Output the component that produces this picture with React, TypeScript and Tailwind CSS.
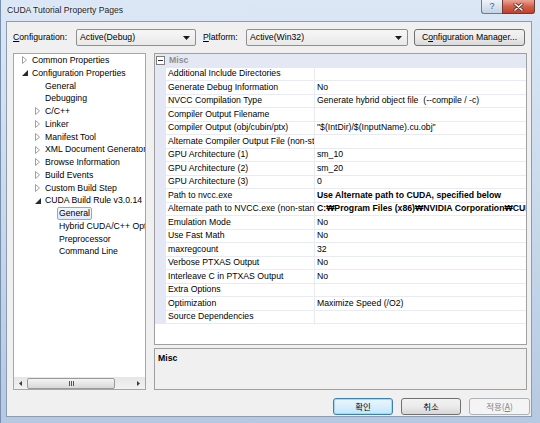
import React from 'react';

type TreeItem = { label: string; level: 0 | 1 | 2; arrow?: 'closed' | 'open'; selected?: boolean };

const treeItems: TreeItem[] = [
  { label: 'Common Properties', level: 0, arrow: 'closed' },
  { label: 'Configuration Properties', level: 0, arrow: 'open' },
  { label: 'General', level: 1 },
  { label: 'Debugging', level: 1 },
  { label: 'C/C++', level: 1, arrow: 'closed' },
  { label: 'Linker', level: 1, arrow: 'closed' },
  { label: 'Manifest Tool', level: 1, arrow: 'closed' },
  { label: 'XML Document Generator', level: 1, arrow: 'closed' },
  { label: 'Browse Information', level: 1, arrow: 'closed' },
  { label: 'Build Events', level: 1, arrow: 'closed' },
  { label: 'Custom Build Step', level: 1, arrow: 'closed' },
  { label: 'CUDA Build Rule v3.0.14', level: 1, arrow: 'open' },
  { label: 'General', level: 2, selected: true },
  { label: 'Hybrid CUDA/C++ Options', level: 2 },
  { label: 'Preprocessor', level: 2 },
  { label: 'Command Line', level: 2 },
];

const indent = ['w-[6px]', 'w-[19px]', 'w-[33px]'];

type Prop = { name: string; value: string; bold?: boolean };

const props: Prop[] = [
  { name: 'Additional Include Directories', value: '' },
  { name: 'Generate Debug Information', value: 'No' },
  { name: 'NVCC Compilation Type', value: 'Generate hybrid object file  (--compile / -c)' },
  { name: 'Compiler Output Filename', value: '' },
  { name: 'Compiler Output (obj/cubin/ptx)', value: '"$(IntDir)/$(InputName).cu.obj"' },
  { name: 'Alternate Compiler Output File (non-standard)', value: '' },
  { name: 'GPU Architecture (1)', value: 'sm_10' },
  { name: 'GPU Architecture (2)', value: 'sm_20' },
  { name: 'GPU Architecture (3)', value: '0' },
  { name: 'Path to nvcc.exe', value: 'Use Alternate path to CUDA, specified below', bold: true },
  { name: 'Alternate path to NVCC.exe (non-standard)', value: 'C:₩Program Files (x86)₩NVIDIA Corporation₩CUDA₩v3.0', bold: true },
  { name: 'Emulation Mode', value: 'No' },
  { name: 'Use Fast Math', value: 'No' },
  { name: 'maxregcount', value: '32' },
  { name: 'Verbose PTXAS Output', value: 'No' },
  { name: 'Interleave C in PTXAS Output', value: 'No' },
  { name: 'Extra Options', value: '' },
  { name: 'Optimization', value: 'Maximize Speed (/O2)' },
  { name: 'Source Dependencies', value: '' },
];

const DropArrow = () => (
  <svg width="7" height="4" viewBox="0 0 7 4" className="shrink-0">
    <polygon points="0,0 7,0 3.5,4" fill="#1a1a1a" />
  </svg>
);

const Combo = ({ text, width }: { text: string; width: string }) => (
  <div className={`${width} h-[17px] flex items-center justify-between pl-[3px] pr-[5px] border border-[#8e8f8f] rounded-[2px] bg-linear-to-b from-[#f7f7f7] to-[#e9e9e9]`}>
    <span>{text}</span>
    <DropArrow />
  </div>
);

const TreeArrow = ({ kind }: { kind?: 'closed' | 'open' }) => {
  if (kind === 'closed')
    return (
      <svg width="5" height="8" viewBox="0 0 5 8">
        <polygon points="0.5,0.5 4.5,4 0.5,7.5" fill="none" stroke="#a0a0a0" strokeWidth="1" />
      </svg>
    );
  if (kind === 'open')
    return (
      <svg width="6" height="6" viewBox="0 0 6 6">
        <polygon points="6,0 6,6 0,6" fill="#2b2b2b" />
      </svg>
    );
  return null;
};

export default function App() {
  return (
    <div className="w-[540px] h-[423px] overflow-hidden flex flex-col bg-linear-to-b from-[#dbe7f5] via-[#c9d9ec] to-[#b5c9e2] border-l border-[#7890ad] text-[8.7px] leading-none text-black font-[family-name:'Liberation_Sans','Noto_Sans_CJK_KR',sans-serif]">
      {/* Title bar */}
      <div className="h-[21px] flex items-start shrink-0">
        <div className="pl-[6px] pt-[6px] text-[8.6px] text-[#1e1e1e] [text-shadow:0_0_4px_#ffffff]">CUDA Tutorial Property Pages</div>
        <div className="ml-auto mr-[5px] flex">
          <div className="w-[21px] h-[14px] flex items-center justify-center border border-r-0 border-t-0 border-[#6b7d94] rounded-bl-[3px] bg-linear-to-b from-[#eef3f9] to-[#c5d3e4] text-[9px] text-[#4a5a70]">?</div>
          <div className="w-[33px] h-[14px] flex items-center justify-center border border-t-0 border-[#6f3a32] rounded-br-[3px] bg-linear-to-b from-[#e9a596] via-[#d2604a] to-[#c0412b]">
            <svg width="11" height="8" viewBox="0 0 11 8">
              <path d="M2 1 L9 7 M9 1 L2 7" stroke="#5a2a22" strokeWidth="3" strokeLinecap="round" />
              <path d="M2 1 L9 7 M9 1 L2 7" stroke="#ffffff" strokeWidth="1.6" strokeLinecap="round" />
            </svg>
          </div>
        </div>
      </div>

      <div className="flex h-[396px] shrink-0">
        <div className="w-[5px] shrink-0" />

        {/* Client area */}
        <div className="w-[526px] h-[396px] shrink-0 flex flex-col border border-[#8c9db3] bg-[#f0f0f0] pl-[6px] pr-[3px] pt-[7px]">
          {/* Configuration row */}
          <div className="h-[17px] flex items-center shrink-0">
            <span className="w-[63px]"><span className="underline">C</span>onfiguration:</span>
            <Combo text="Active(Debug)" width="w-[120px]" />
            <span className="w-[43px] ml-[7px]"><span className="underline">P</span>latform:</span>
            <Combo text="Active(Win32)" width="w-[162px]" />
            <div className="ml-[6px] w-[111px] h-[17px] flex items-center justify-center border border-[#707070] rounded-[3px] bg-linear-to-b from-[#f3f3f3] via-[#ebebeb] to-[#dadada]">
              C<span className="underline">o</span>nfiguration Manager...
            </div>
          </div>

          {/* Main area */}
          <div className="mt-[7px] h-[337px] flex gap-[8px] shrink-0">
            {/* Tree */}
            <div className="w-[133px] h-full flex flex-col border border-[#a3a7ad] bg-white">
              <div className="flex-1 overflow-hidden">
                {treeItems.map((item, i) => (
                  <div key={i} className="h-[12.75px] flex items-center whitespace-nowrap">
                    <div className={`${indent[item.level]} shrink-0`} />
                    <div className="w-[10px] shrink-0 flex items-center pl-[2px]">
                      <TreeArrow kind={item.arrow} />
                    </div>
                    <span
                      className={
                        item.selected
                          ? 'px-[1px] h-[13px] flex items-center border border-[#84acdd] rounded-[2px] bg-linear-to-b from-[#f2f8fe] to-[#dcebfc]'
                          : 'px-[1px] border border-transparent'
                      }
                    >
                      {item.label}
                    </span>
                  </div>
                ))}
              </div>
              {/* Horizontal scrollbar */}
              <div className="h-[12px] shrink-0 flex items-center bg-linear-to-b from-[#e6e6e6] to-[#f2f2f2]">
                <div className="w-[13px] flex justify-center">
                  <svg width="3" height="5" viewBox="0 0 3 5"><polygon points="3,0 3,5 0,2.5" fill="#3c3c3c" /></svg>
                </div>
                <div className="w-[88px] h-[11px] flex items-center justify-center gap-[1px] border border-[#9a9a9a] rounded-[2px] bg-linear-to-b from-[#f4f4f4] to-[#d8d8d8]">
                  <div className="w-px h-[5px] bg-[#555]" />
                  <div className="w-px h-[5px] bg-[#555]" />
                  <div className="w-px h-[5px] bg-[#555]" />
                </div>
                <div className="flex-1 flex justify-end pr-[5px]">
                  <svg width="3" height="5" viewBox="0 0 3 5"><polygon points="0,0 0,5 3,2.5" fill="#3c3c3c" /></svg>
                </div>
              </div>
            </div>

            {/* Property grid */}
            <div className="w-[373px] h-full flex flex-col">
              <div className="h-[292px] shrink-0 border border-[#a0a0a0] bg-white overflow-hidden">
                <div className="h-[13.5px] flex items-center bg-[#e4e8f4]">
                  <div className="w-[11px] flex justify-center">
                    <svg width="9" height="9" viewBox="0 0 9 9">
                      <rect x="0.5" y="0.5" width="8" height="8" fill="#ffffff" stroke="#7d7d7d" />
                      <path d="M2 4.5 H7" stroke="#2a2a2a" />
                    </svg>
                  </div>
                  <span className="pl-[3px] font-bold text-[#8e8e8e]">Misc</span>
                </div>
                {props.map((p) => (
                  <div key={p.name} className="h-[13.5px] flex">
                    <div className="w-[11px] shrink-0 bg-[#e4e8f4]" />
                    <div className="w-[149px] shrink-0 flex items-center pl-[2px] border-r border-b border-[#e8ebf4] overflow-hidden whitespace-nowrap">
                      {p.name}
                    </div>
                    <div className={`flex-1 flex items-center pl-[2px] border-b border-[#e8ebf4] overflow-hidden whitespace-pre ${p.bold ? 'font-bold' : ''}`}>
                      {p.value}
                    </div>
                  </div>
                ))}
              </div>
              <div className="h-[3px] shrink-0" />
              <div className="flex-1 border border-[#a0a0a0] bg-[#f0f0f0] pl-[3px] pt-[5px]">
                <span className="font-bold">Misc</span>
              </div>
            </div>
          </div>

          {/* Dialog buttons */}
          <div className="mt-[8px] -mr-[2px] h-[17px] flex justify-end gap-[8px] shrink-0 font-[family-name:'Noto_Sans_CJK_KR','Liberation_Sans',sans-serif] text-[8.5px]">
            <div className="w-[60px] h-[17px] flex items-center justify-center border border-[#3c7fb1] rounded-[3px] bg-linear-to-b from-[#eaf6fd] via-[#d9effc] to-[#bee6fd] shadow-[inset_0_0_0_1px_#a6d7f5]">확인</div>
            <div className="w-[60px] h-[17px] flex items-center justify-center border border-[#707070] rounded-[3px] bg-linear-to-b from-[#f2f2f2] via-[#ebebeb] to-[#d6d6d6]">취소</div>
            <div className="w-[61px] h-[17px] flex items-center justify-center border border-[#adb2b5] rounded-[3px] bg-[#f4f4f4] text-[#838383]">
              적용(<span className="underline">A</span>)
            </div>
          </div>
        </div>

        <div className="flex-1" />
      </div>
    </div>
  );
}
